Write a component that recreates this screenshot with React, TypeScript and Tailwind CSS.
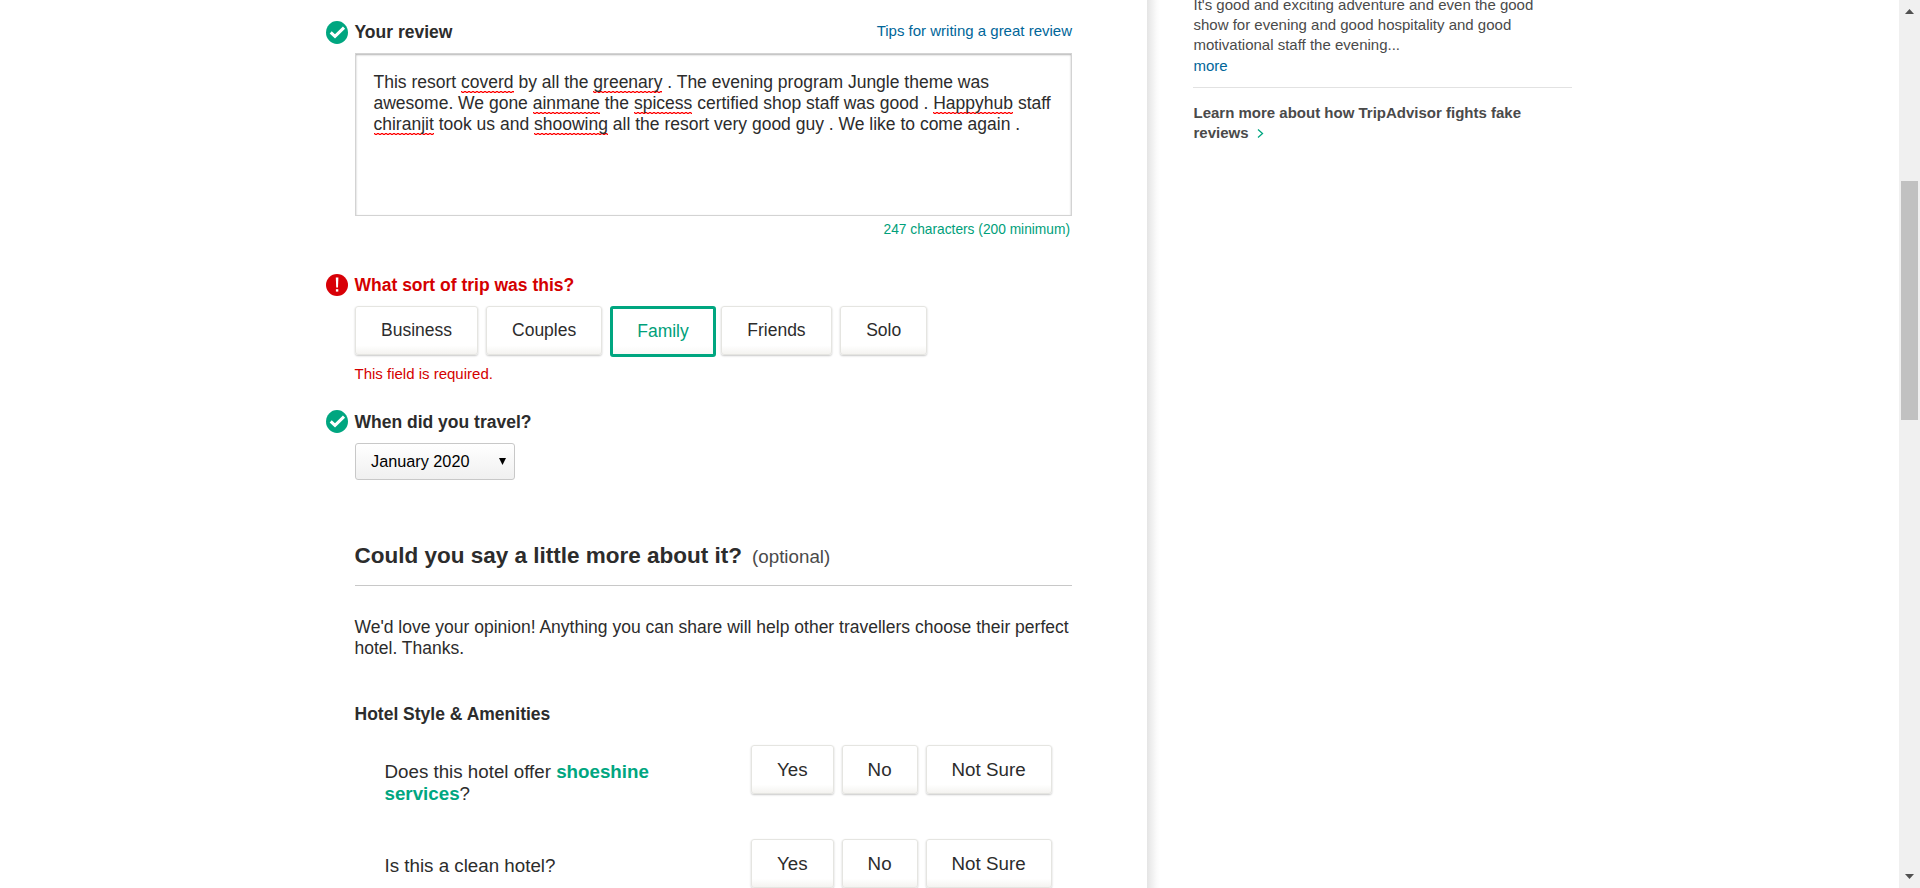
import type { ReactNode } from "react";

function CheckBadge({ className = "" }: { className?: string }) {
  return (
    <svg className={`h-[23px] w-[22px] shrink-0 ${className}`} viewBox="0 0 22 23" fill="none">
      <ellipse cx="11" cy="11.5" rx="11" ry="11.4" fill="#00a680" />
      <path d="M4.7 11.4 9 15.4 18 6.6" stroke="#fff" strokeWidth="3" />
    </svg>
  );
}

function ErrorBadge() {
  return (
    <svg className="mt-px h-[22px] w-[22px] shrink-0" viewBox="0 0 22 22" fill="none">
      <circle cx="11" cy="11" r="11" fill="#d80007" />
      <path d="M9.8 3.6h2.6l-.4 9.8h-1.8z" fill="#fff" />
      <rect x="9.9" y="15.2" width="2.4" height="2.4" fill="#fff" />
    </svg>
  );
}

function FieldHeading({ badge, error, children, aside }: { badge: ReactNode; error?: boolean; children: ReactNode; aside?: ReactNode }) {
  return (
    <div className="flex h-6 items-start">
      {badge}
      <h3 className={`ml-[6.5px] grow text-[17.5px] leading-6 font-bold ${error ? "text-[#d40000]" : ""}`}>{children}</h3>
      {aside}
    </div>
  );
}

function Misspelled({ children }: { children: ReactNode }) {
  return (
    <span className="bg-[radial-gradient(circle_at_2px_-1px,transparent_1.5px,#f00_1.7px,#f00_2.8px,transparent_3px)] bg-[length:4px_3px] bg-bottom-left bg-repeat-x pb-0.5">
      {children}
    </span>
  );
}

const choiceClass =
  "h-[49px] shrink-0 rounded-[3px] border border-[#e5e5e1] bg-[linear-gradient(to_bottom,#fff_82%,#f4f3f0)] px-[25px] whitespace-nowrap shadow-[0_1px_2px_rgba(0,0,0,0.22)]";

function Choice({ label, className = "" }: { label: string; className?: string }) {
  return <button className={`${choiceClass} ${className}`}>{label}</button>;
}

function Question({ children }: { children: ReactNode }) {
  return (
    <div className="flex h-[94px] items-start pl-[29.5px] text-[18.75px]">
      <p className="mt-4 w-[366.5px] shrink-0 pr-[90px] leading-[22px]">{children}</p>
      <div className="flex gap-2">
        <Choice label="Yes" className="pt-0.5" />
        <Choice label="No" className="pt-0.5" />
        <Choice label="Not Sure" className="pt-0.5" />
      </div>
    </div>
  );
}

function ReviewForm() {
  return (
    <main className="w-[1147px] shrink-0 pt-5 pr-[75px] pl-[326px]">
      <FieldHeading
        badge={<CheckBadge className="mt-px" />}
        aside={<a className="text-[15px] leading-[22px] text-[#069]">Tips for writing a great review</a>}
      >
        Your review
      </FieldHeading>
      <div className="pl-[29px]">
        <div className="mt-[9px] h-[163px] border border-[#d3d3d3] pt-[18px] pl-[17.5px] text-[17.5px] leading-[21px] whitespace-nowrap shadow-[inset_0_1px_2px_rgba(0,0,0,0.3)]">
          This resort <Misspelled>coverd</Misspelled> by all the <Misspelled>greenary</Misspelled> . The evening program Jungle theme was
          <br />
          awesome. We gone <Misspelled>ainmane</Misspelled> the <Misspelled>spicess</Misspelled> certified shop staff was good .{" "}
          <Misspelled>Happyhub</Misspelled> staff
          <br />
          <Misspelled>chiranjit</Misspelled> took us and <Misspelled>shoowing</Misspelled> all the resort very good guy . We like to come again .
        </div>
        <p className="mt-1 pr-0.5 text-right text-[13.75px] leading-5 text-[#00a07a]">247 characters (200 minimum)</p>
      </div>

      <div className="mt-[33px]">
        <FieldHeading badge={<ErrorBadge />} error>
          What sort of trip was this?
        </FieldHeading>
        <div className="pl-[29px]">
          <div className="mt-[9px] flex h-[51px] text-[17.5px]">
            <Choice label="Business" className="mr-2 pb-px" />
            <Choice label="Couples" className="mr-2 pb-px" />
            <button className="mr-[5.5px] h-[51px] rounded-[3px] border-3 border-[#00a680] bg-[linear-gradient(to_bottom,#fff_82%,#f8f8f6)] px-6 pb-px text-[#00a07a]">
              Family
            </button>
            <Choice label="Friends" className="mr-[8.5px] pb-px" />
            <Choice label="Solo" className="pb-px" />
          </div>
          <p className="mt-[7px] -ml-[0.5px] text-[15px] leading-5 text-[#d40000]">This field is required.</p>
        </div>
      </div>

      <div className="mt-[26px]">
        <FieldHeading badge={<CheckBadge />}>When did you travel?</FieldHeading>
        <div className="mt-[9px] ml-[29px] flex h-[37px] w-40 items-center justify-between rounded-[3px] border border-[#c8c8c8] bg-linear-to-b from-white to-[#f0f0f0] pr-2 pl-[15px] text-[16.25px] text-black">
          January 2020
          <svg className="h-[7px] w-[7px]" viewBox="0 0 7 7">
            <path d="M0 0h7L3.5 7z" />
          </svg>
        </div>
      </div>

      <section className="mt-[60px] pl-[29px]">
        <div className="flex h-[46px] items-baseline gap-[10px] border-b border-[#c8c8c8] pt-px">
          <h2 className="-ml-[0.5px] text-[22.5px] leading-[30px] font-bold whitespace-nowrap">Could you say a little more about it?</h2>
          <span className="text-[18.75px] leading-[30px] text-[#4a4a4a]">(optional)</span>
        </div>
        <p className="mt-[31px] -ml-[0.5px] text-[17.5px] leading-[21px] whitespace-nowrap">
          We'd love your opinion! Anything you can share will help other travellers choose their perfect
          <br />
          hotel. Thanks.
        </p>
        <h3 className="mt-[43px] mb-[19px] -ml-[0.5px] text-[17.5px] leading-6 font-bold">Hotel Style &amp; Amenities</h3>
        <Question>
          Does this hotel offer <b className="text-[#00a680]">shoeshine services</b>?
        </Question>
        <Question>Is this a clean hotel?</Question>
      </section>
    </main>
  );
}

function Sidebar() {
  return (
    <aside className="flex grow bg-white text-[15px] leading-5 text-[#4a4a4a]">
      <div className="w-[13px] shrink-0 bg-[linear-gradient(to_right,#e4e4e4,#efefef_35%,#fbfbfb_75%,#fff)]" />
      <div className="-mt-[5px] ml-[33px] w-[379px]">
        <p className="pl-[0.5px] whitespace-nowrap">
          It's good and exciting adventure and even the good
          <br />
          show for evening and good hospitality and good
          <br />
          motivational staff the evening...
        </p>
        <a className="mt-px block pl-[0.5px] text-[#069]">more</a>
        <div className="mt-[11px] border-t border-[#e2e2e2] pt-[15px] pl-[0.5px] font-bold">
          Learn more about how TripAdvisor fights fake
          <br />
          <span className="flex items-center">
            reviews
            <svg className="ml-2 h-[9px] w-[7px]" viewBox="0 0 7 9" fill="none">
              <path d="M1 .5 5.5 4.5 1 8.5" stroke="#00a680" strokeWidth="1.3" />
            </svg>
          </span>
        </div>
      </div>
    </aside>
  );
}

function Scrollbar() {
  return (
    <div className="flex w-[21px] shrink-0 flex-col items-center bg-[#f0f0f0] pt-[9px] pr-px pb-[9px]">
      <svg className="h-[5px] w-[9px]" viewBox="0 0 9 5">
        <path d="M0 5 4.5 0 9 5z" fill="#505050" />
      </svg>
      <div className="mt-[167px] h-[239px] w-[17px] bg-[#c1c1c1]" />
      <svg className="mt-auto h-[5px] w-[9px]" viewBox="0 0 9 5">
        <path d="M0 0 4.5 5 9 0z" fill="#505050" />
      </svg>
    </div>
  );
}

export default function App() {
  return (
    <div className="flex h-[888px] w-[1920px] overflow-hidden bg-white font-['Liberation_Sans',Arial,sans-serif] text-[#2c2c2c]">
      <ReviewForm />
      <Sidebar />
      <Scrollbar />
    </div>
  );
}
